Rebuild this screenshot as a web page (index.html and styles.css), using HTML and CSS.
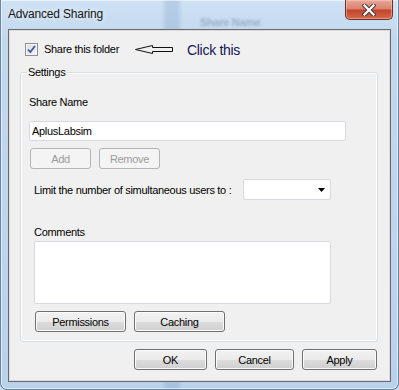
FILE: index.html
```html
<!DOCTYPE html>
<html lang="en">
<head>
  <meta charset="UTF-8" />
  <title>Advanced Sharing</title>
  <link rel="stylesheet" href="styles.css">
</head>
<body>
  <div class="window">
    <div class="titlebar">
      <span class="title">Advanced Sharing</span>
      <span class="ghost">Share Name</span>
      <button class="close-btn" aria-label="Close">
        <svg width="14" height="12" viewBox="0 0 14 12">
          <path d="M2.5 1.5 L11.5 10.5 M11.5 1.5 L2.5 10.5" stroke="#4a3a3a" stroke-width="4.2" stroke-linecap="square"/>
          <path d="M2.5 1.5 L11.5 10.5 M11.5 1.5 L2.5 10.5" stroke="#fff" stroke-width="2.2" stroke-linecap="square"/>
        </svg>
      </button>
    </div>

    <div class="client">
      <div class="share-row">
        <span class="checkbox">
          <svg width="11" height="11" viewBox="0 0 11 11">
            <path d="M2 5.5 L4.3 8 L9 2" fill="none" stroke="#3d5aa3" stroke-width="1.8"/>
          </svg>
        </span>
        <span class="share-label">Share this folder</span>
        <svg class="hint-arrow" width="40" height="12" viewBox="0 0 40 12">
          <polygon points="1.5,5.5 18.5,1.5 18.5,3.5 38.5,3.5 38.5,7.5 18.5,7.5 18.5,9.5" fill="none" stroke="#111" stroke-width="1"/>
        </svg>
        <span class="hint">Click this</span>
      </div>

      <fieldset class="group">
        <legend>Settings</legend>
        <div class="field-label">Share Name</div>
        <div class="textbox">AplusLabsim</div>
        <div class="btn-row">
          <button class="btn btn-small" disabled>Add</button>
          <button class="btn btn-small" disabled>Remove</button>
        </div>
        <div class="limit-row">
          <span class="limit-label">Limit the number of simultaneous users to :</span>
          <div class="combo">
            <svg width="7" height="4" viewBox="0 0 7 4"><polygon points="0,0 7,0 3.5,4" fill="#000"/></svg>
          </div>
        </div>
        <div class="field-label comments-label">Comments</div>
        <div class="memo"></div>
        <div class="btn-row sub-row">
          <button class="btn btn-wide">Permissions</button>
          <button class="btn btn-wide">Caching</button>
        </div>
      </fieldset>

      <div class="dialog-buttons">
        <button class="btn btn-ok">OK</button>
        <button class="btn btn-cancel">Cancel</button>
        <button class="btn btn-apply">Apply</button>
      </div>
    </div>
  </div>
</body>
</html>
```

FILE: styles.css
```css
* {
  box-sizing: border-box;
}

body {
  margin: 0;
  width: 399px;
  height: 390px;
  overflow: hidden;
  font-family: 'Liberation Sans', Arial, sans-serif;
  font-size: 11px;
  letter-spacing: -0.3px;
  color: #000;
  background: #c9ddf2;
}

.window {
  width: 399px;
  height: 390px;
  display: flex;
  flex-direction: column;
  border: 1px solid #6b84a0;
  border-top: none;
  border-radius: 0 0 7px 7px;
  background:
    linear-gradient(90deg, rgba(255,255,255,0) 0, rgba(255,255,255,0) 160px, rgba(110,145,190,0.25) 166px, rgba(110,145,190,0.25) 176px, rgba(255,255,255,0) 182px),
    linear-gradient(180deg, #cfe1f4 0, #c2d8ef 40px, #b9d2ec 100%);
  box-shadow: inset 0 0 0 1px rgba(255,255,255,0.55);
}

.titlebar {
  position: relative;
  height: 29px;
  flex-shrink: 0;
  display: flex;
  align-items: flex-start;
}

.title {
  padding: 7px 0 0 7px;
  font-size: 12px;
  line-height: 15px;
  letter-spacing: -0.2px;
  color: #141414;
  text-shadow: 0 0 6px rgba(255,255,255,0.9);
}

.ghost {
  position: absolute;
  left: 199px;
  top: 16px;
  font-size: 11px;
  font-weight: bold;
  color: rgba(90,110,140,0.4);
  filter: blur(1.2px);
}

.close-btn {
  margin-left: auto;
  margin-right: 5px;
  width: 48px;
  height: 20px;
  padding: 0;
  display: flex;
  align-items: center;
  justify-content: center;
  border: 1px solid #6e3026;
  border-top: none;
  border-radius: 0 0 5px 5px;
  background: linear-gradient(180deg, #e9a899 0, #d9826d 45%, #c4442c 55%, #d26a4c 100%);
  box-shadow: inset 0 0 0 1px rgba(255,210,200,0.45);
}

.client {
  flex: 1;
  margin: 0 7px 7px 7px;
  display: flex;
  flex-direction: column;
  background: #f0f0f0;
  border: 1px solid #6a6a6a;
  box-shadow: inset 0 0 0 1px #dcdcdc;
}

.share-row {
  display: flex;
  align-items: center;
  height: 13px;
  margin: 13px 0 0 16px;
}

.checkbox {
  width: 13px;
  height: 13px;
  display: flex;
  align-items: center;
  justify-content: center;
  border: 1px solid #8e8f8f;
  background: linear-gradient(135deg, #dcdcdc, #f6f6f6);
  box-shadow: inset 0 0 0 1px #f4f4f4;
}

.share-label {
  margin-left: 6px;
  line-height: 13px;
}

.hint-arrow {
  margin-left: 15px;
}

.hint {
  margin-left: 13px;
  font-size: 14px;
  letter-spacing: -0.3px;
  color: #15155a;
  line-height: 16px;
}

.group {
  margin: 9px 12px 0 11px;
  padding: 0 8px 9px 8px;
  border: 1px solid #d5dfe5;
  border-radius: 3px;
  box-shadow: inset 0 0 0 1px #fff;
  min-width: 0;
}

.group legend {
  margin-left: -2px;
  padding: 0 1px;
  font-size: 11px;
  line-height: 14px;
}

.field-label {
  margin-top: 17px;
  line-height: 13px;
}

.textbox {
  margin-top: 12px;
  width: 317px;
  height: 20px;
  display: flex;
  align-items: center;
  padding-left: 2px;
  background: #fff;
  border: 1px solid #d6dae0;
  border-radius: 2px;
}

.btn-row {
  display: flex;
  gap: 8px;
  margin: 7px 0 0 1px;
}

.btn {
  height: 21px;
  padding: 0;
  font-family: 'Liberation Sans', Arial, sans-serif;
  font-size: 11px;
  letter-spacing: -0.3px;
  color: #000;
  border: 1px solid #707070;
  border-radius: 3px;
  background: linear-gradient(180deg, #f2f2f2 0, #ebebeb 50%, #dddddd 50%, #cfcfcf 100%);
  box-shadow: inset 0 0 0 1px #fbfbfb;
}

.btn:disabled {
  color: #9c9c9c;
  border-color: #b3b6b9;
  background: #f4f4f4;
  box-shadow: none;
}

.btn-small {
  width: 61px;
}

.limit-row {
  display: flex;
  align-items: center;
  margin: 10px 0 0 5px;
}

.limit-label {
  width: 209px;
}

.combo {
  width: 88px;
  height: 21px;
  display: flex;
  align-items: center;
  justify-content: flex-end;
  padding-right: 5px;
  background: #fff;
  border: 1px solid #d6dae0;
  border-radius: 2px;
}

.comments-label {
  margin: 26px 0 0 5px;
}

.memo {
  margin: 2px 0 0 5px;
  width: 297px;
  height: 63px;
  background: #fff;
  border: 1px solid #d6dae0;
  border-radius: 2px;
}

.sub-row {
  margin-left: 6px;
}

.btn-wide {
  width: 91px;
}

.dialog-buttons {
  display: flex;
  justify-content: flex-end;
  gap: 8px;
  margin: 7px 13px 0 0;
}

.btn-ok {
  width: 73px;
}

.btn-cancel {
  width: 79px;
}

.btn-apply {
  width: 75px;
}
```
